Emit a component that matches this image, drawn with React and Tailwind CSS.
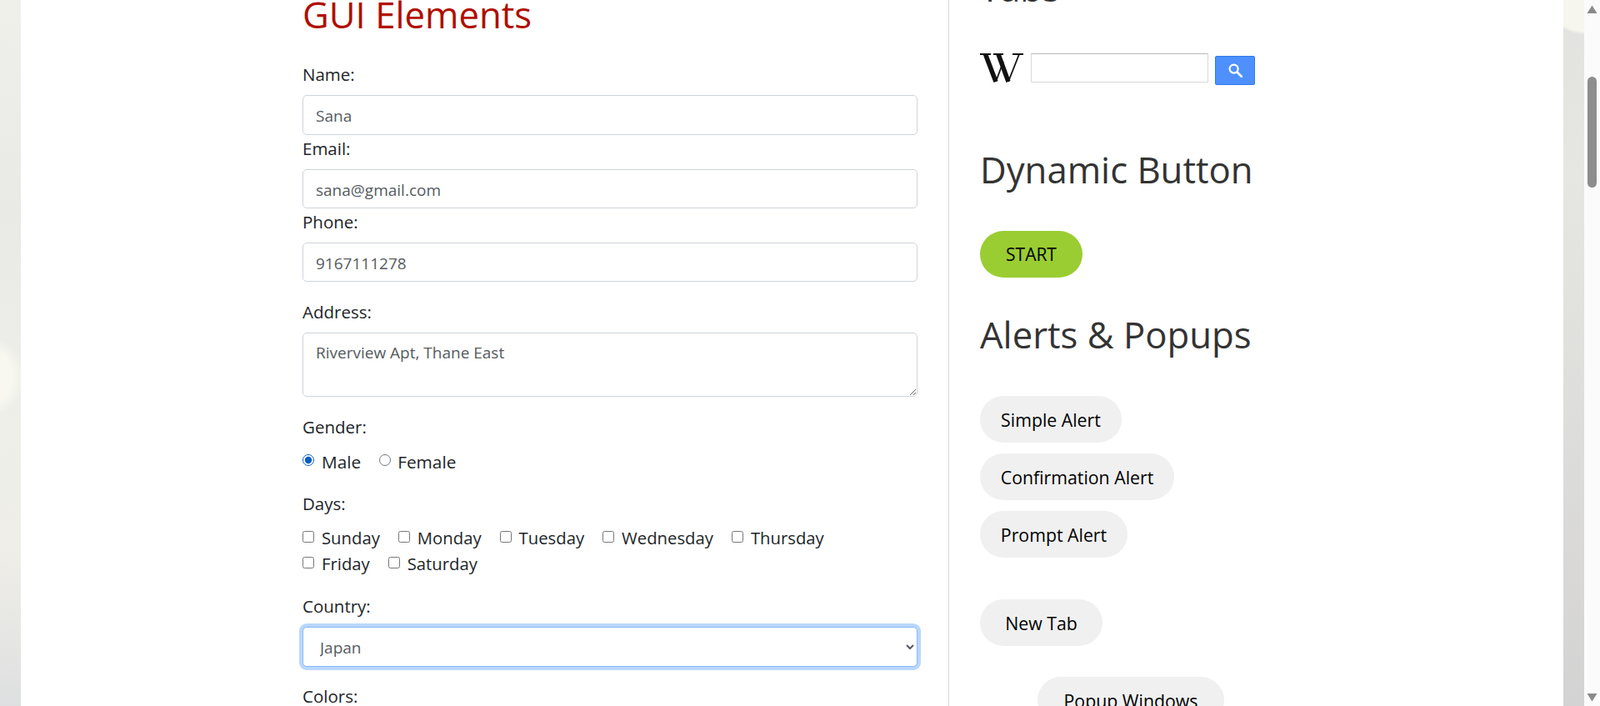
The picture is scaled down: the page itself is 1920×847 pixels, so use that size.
const font = { fontFamily: '"Open Sans", "Noto Sans", sans-serif' }

const days = ['Sunday', 'Monday', 'Tuesday', 'Wednesday', 'Thursday', 'Friday', 'Saturday']

function Label({ children, className = 'mb-2' }) {
  return <label className={`block h-[33px] leading-[33px] text-[20.5px] ${className}`}>{children}</label>
}

function Field({ label, value, className = 'h-[47px]' }) {
  return (
    <div>
      <Label>{label}</Label>
      <input
        type="text"
        defaultValue={value}
        className={`block w-full px-[15px] pt-[2px] border border-[#ced4da] rounded-[5px] text-[#555b61] bg-white ${className}`}
      />
    </div>
  )
}

function PillButton({ children, className = '' }) {
  return (
    <button className={`block h-[56px] pt-[1px] rounded-[28px] bg-[#f0f0f0] text-black text-[21.3px] ${className}`}>
      {children}
    </button>
  )
}

export default function App() {
  return (
    <div className="flex h-[847px] overflow-hidden text-[19px] text-[#212529]" style={font}>
      <div className="w-[25px] shrink-0 bg-[radial-gradient(circle_at_-20px_452px,#f8f8f1_0,#f8f8f1_34px,transparent_50px),linear-gradient(180deg,#eff0ea_0%,#e9eae5_30%,#eeefe9_60%,#efeee8_78%,#dedfe0_100%)]" />

      <div className="flex flex-1 min-w-0 h-full bg-white">
        {/* left column */}
        <div className="w-[1114px] shrink-0 pl-[338px] pr-[37px] border-r border-[#dcdcdc] h-full">
          <h1 className="h-[80px] -mt-[7px] text-[43.7px] leading-[48px] text-[#b00d00]">GUI Elements</h1>
          <Field label="Name:" value="Sana" className="h-[48px]" />
          <Field label="Email:" value="sana@gmail.com" />
          <Field label="Phone:" value="9167111278" />

          <div className="mt-5">
            <Label>Address:</Label>
            <textarea
              defaultValue="Riverview Apt, Thane East"
              className="block w-full h-[77px] px-[15px] py-[9px] border border-[#ced4da] rounded-[5px] text-[#555b61] bg-white resize-y"
            />
          </div>

          <div className="mt-5">
            <Label>Gender:</Label>
            <div className="flex items-center h-[33px] text-[20.8px]">
              <input type="radio" name="gender" defaultChecked className="w-[14px] h-[14px] mb-[3px] accent-[#0a5dc8] mr-[9px]" />
              <span className="mr-[22px] mt-[2px]">Male</span>
              <input type="radio" name="gender" className="w-[14px] h-[14px] mb-[3px] mr-[8px]" />
              <span className="mt-[2px]">Female</span>
            </div>
          </div>

          <div className="mt-[18px]">
            <Label className="mb-[9px]">Days:</Label>
            <div className="flex flex-wrap w-[660px] text-[20.3px] leading-[31px]">
              {days.map((d) => (
                <div key={d} className="flex items-center h-[31px] mr-[22px]">
                  <input type="checkbox" className="w-[14px] h-[14px] mb-[4px] mr-[9px]" />
                  <span>{d}</span>
                </div>
              ))}
            </div>
          </div>

          <div className="mt-[19px]">
            <Label>Country:</Label>
            <select
              defaultValue="Japan"
              className="block w-full h-[48px] pl-4 pr-2 pt-[2px] border border-[#86b7fe] rounded-[5px] text-[#555b61] bg-white ring-4 ring-[#b9d7fd]"
            >
              <option>India</option>
              <option>Japan</option>
            </select>
          </div>

          <div className="mt-[19px]">
            <Label>Colors:</Label>
          </div>
        </div>

        {/* right column */}
        <div className="flex-1 min-w-0 pl-[37px] h-full">
          <h2 className="h-[103px] -mt-[39px] text-[43.7px] leading-[48px] text-[#333]">Tabs</h2>

          <div className="flex items-start">
            {/* wikipedia logo */}
            <svg viewBox="0 0 52 35" className="w-[52px] h-[35px] mr-[9px] shrink-0 stroke-[#111] fill-none">
              <path d="M6.5 1 L19 34" strokeWidth="5.5" />
              <path d="M19 34 L28 10" strokeWidth="1.8" />
              <path d="M22 1 L34 34" strokeWidth="5.5" />
              <path d="M34 34 L47 1" strokeWidth="1.8" />
              <path d="M0 1 H13 M16 1 H28 M39 1 H52" strokeWidth="1.8" />
            </svg>
            <input type="text" className="w-[213px] h-[35px] mr-2 border border-[#d9d9d9] border-t-[#b9b9b9] bg-white" />
            <button className="flex items-center justify-center w-[48px] h-[35px] mt-[3px] rounded-[2px] bg-[#4d90fe] border border-[#3079ed]">
              <svg viewBox="0 0 17 17" className="w-[17px] h-[17px] stroke-white fill-none">
                <circle cx="6.6" cy="6.6" r="5" strokeWidth="2.2" />
                <path d="M10.5 10.5 L16 16" strokeWidth="2.8" strokeLinecap="round" />
              </svg>
            </button>
          </div>

          <h2 className="mt-[77px] text-[43.7px] leading-[48px] text-[#333]">Dynamic Button</h2>
          <button className="block mt-[50px] w-[123px] h-[56px] pt-[1px] rounded-[28px] bg-[#9acd32] text-black text-[21px]">START</button>

          <h2 className="mt-[44px] text-[43.7px] leading-[48px] text-[#333]">Alerts &amp; Popups</h2>
          <PillButton className="mt-[50px] w-[170px]">Simple Alert</PillButton>
          <PillButton className="mt-[13px] w-[233px]">Confirmation Alert</PillButton>
          <PillButton className="mt-[13px] w-[177px]">Prompt Alert</PillButton>
          <PillButton className="mt-[50px] w-[147px]">New Tab</PillButton>
          <PillButton className="mt-[37px] ml-[69px] w-[224px]">Popup Windows</PillButton>
        </div>
      </div>

      <div className="w-[25px] shrink-0 bg-[radial-gradient(circle_at_29px_-20px,#f6f6ee_0,#f6f6ee_58px,transparent_62px),linear-gradient(180deg,#e2e2e0_0%,#e6e6e2_25%,#dddddb_60%,#d4d3d3_100%)]" />

      {/* scrollbar */}
      <div className="w-[19px] shrink-0 flex flex-col items-center bg-[#fbfbfb] h-full pt-[6px] pb-[5px]">
        <svg viewBox="0 0 13 10" className="w-[13px] h-[10px] fill-[#8a8a8a] shrink-0">
          <path d="M6.5 0.5 L12.5 10 L0.5 10 Z" />
        </svg>
        <div className="w-[11px] h-[133px] mt-[76px] rounded-full bg-[#8d8d8d] shrink-0" />
        <svg viewBox="0 0 13 10" className="w-[13px] h-[10px] fill-[#8a8a8a] mt-auto shrink-0">
          <path d="M0.5 0 L12.5 0 L6.5 9.5 Z" />
        </svg>
      </div>
    </div>
  )
}
